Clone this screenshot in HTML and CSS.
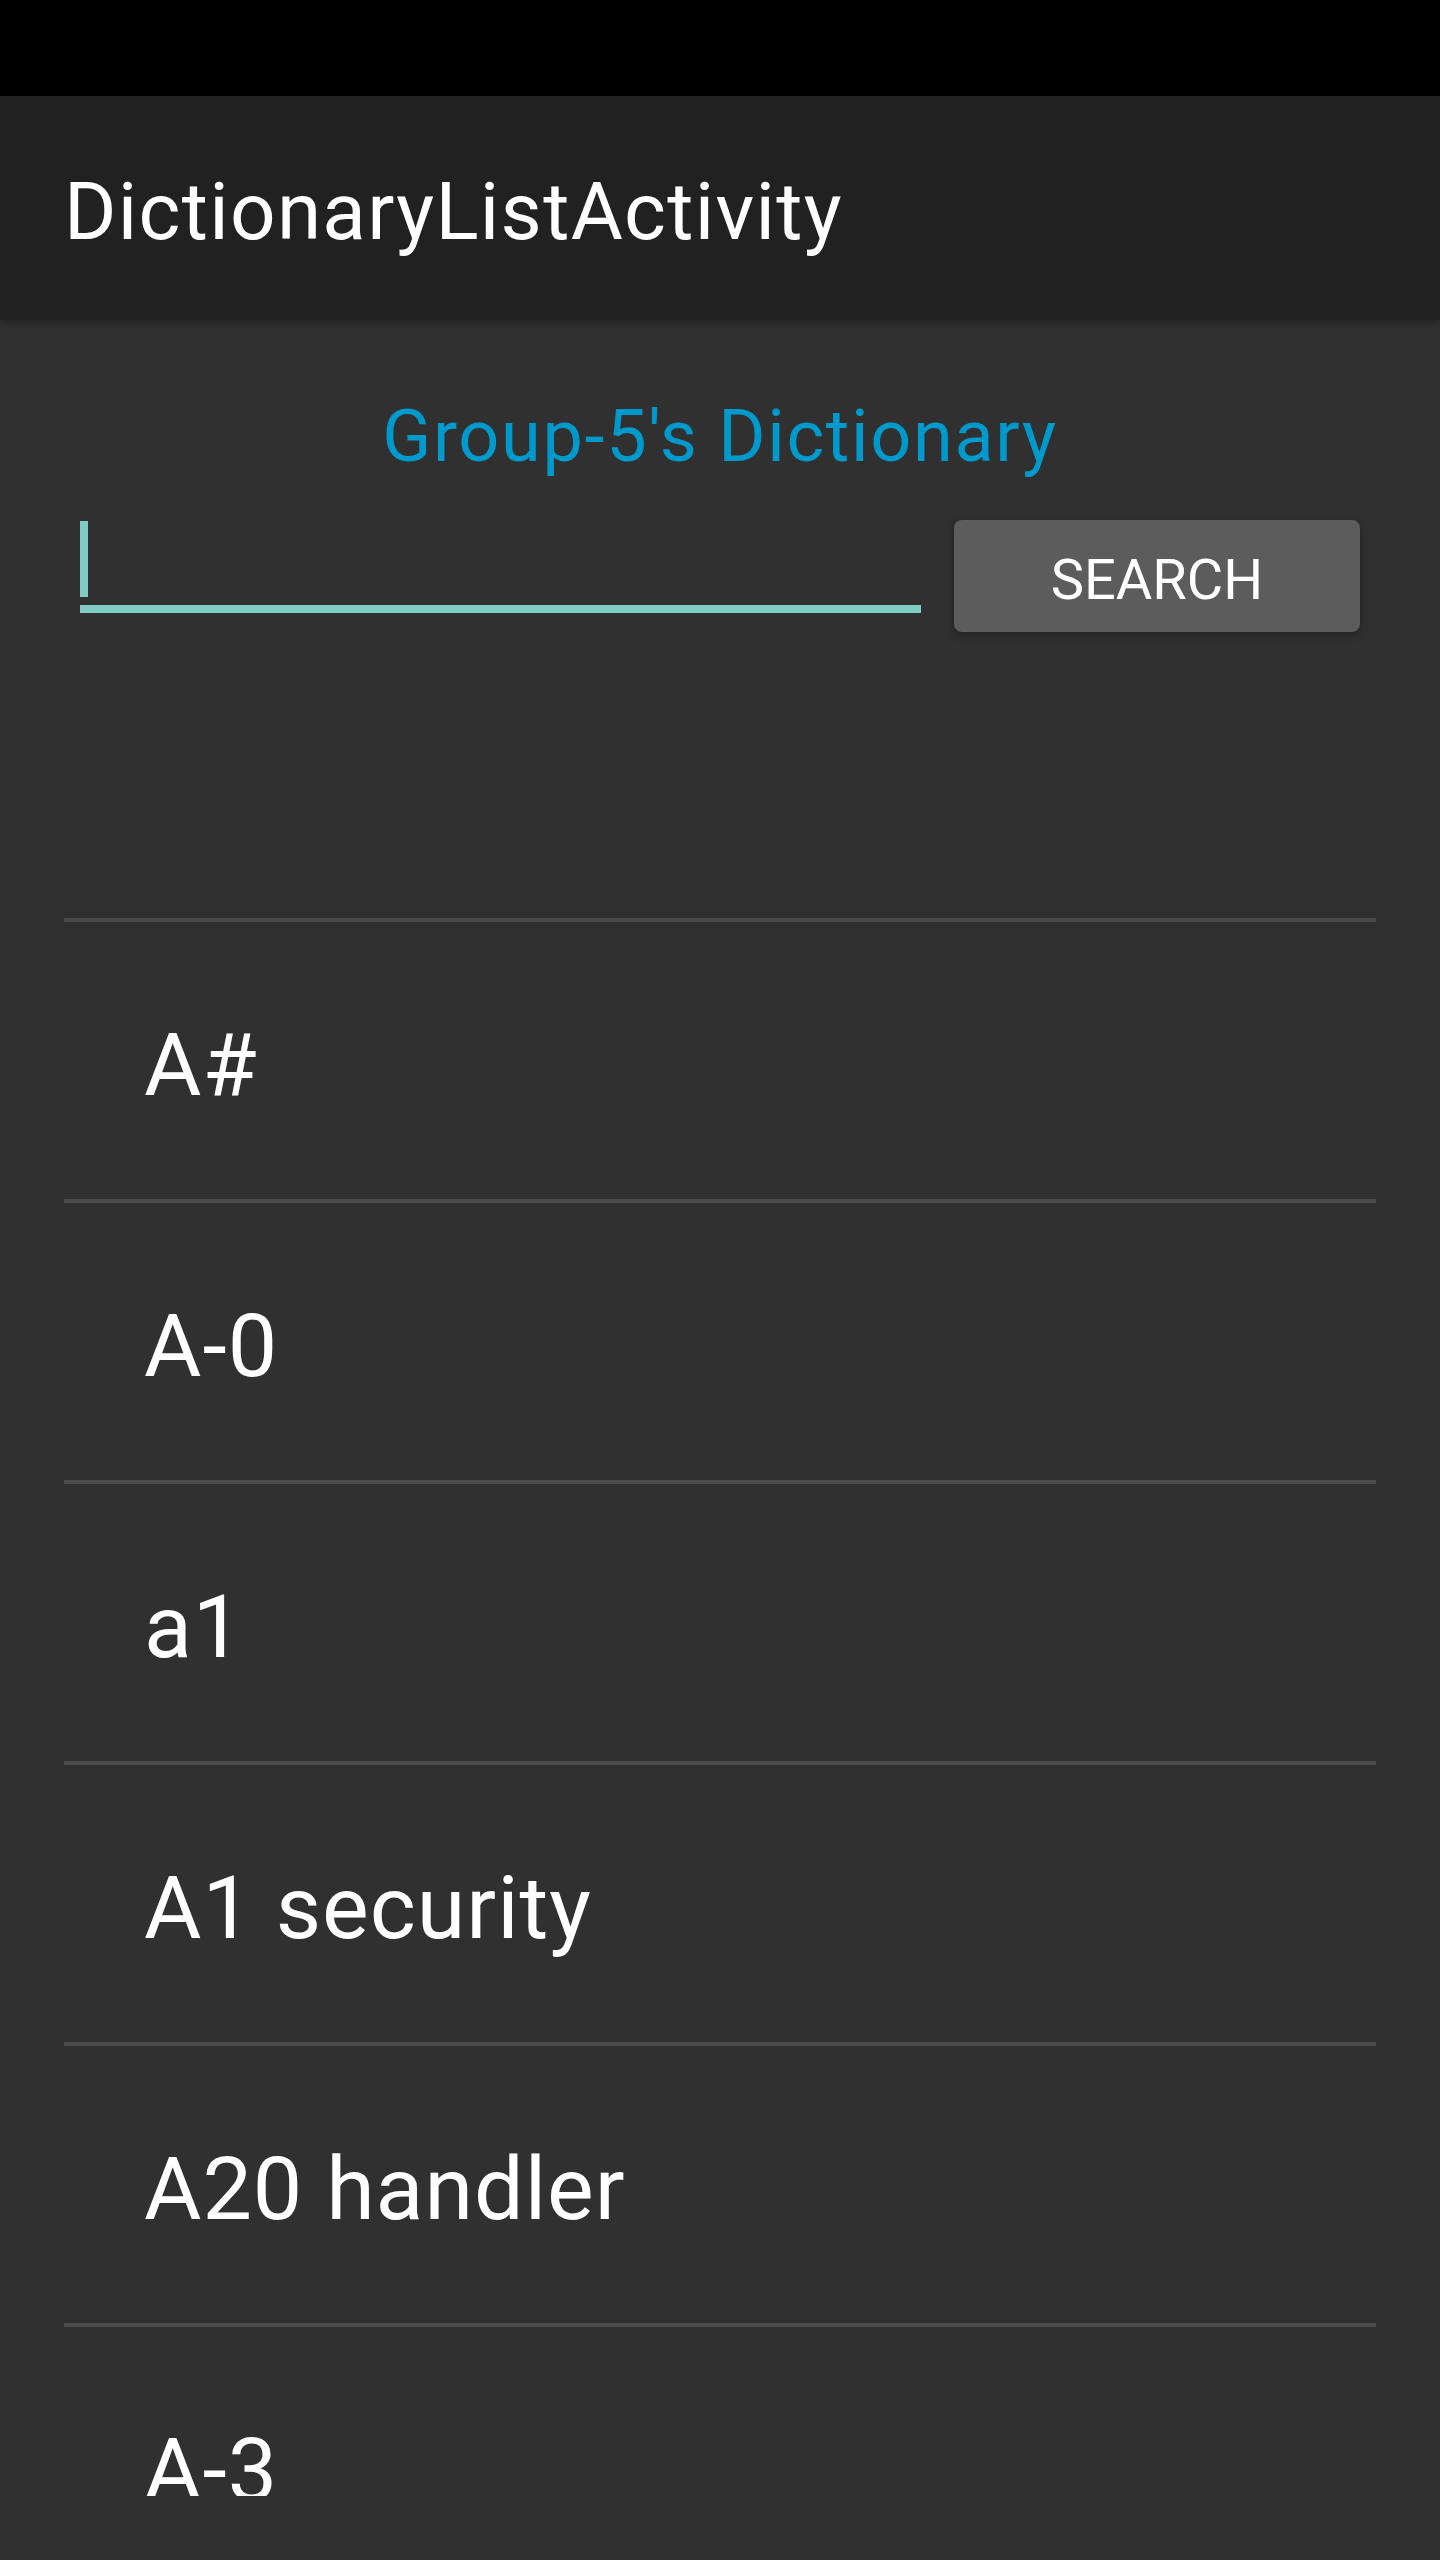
FILE: index.html
```html
<!DOCTYPE html>
<html lang="en">
<head>
<meta charset="utf-8">
<title>DictionaryListActivity</title>
<link rel="stylesheet" href="styles.css">
</head>
<body>
<div class="screen">
  <div class="status-bar"></div>
  <header class="app-bar">
    <h1 class="app-title">DictionaryListActivity</h1>
  </header>
  <main class="content">
    <h2 class="heading">Group-5's Dictionary</h2>
    <div class="search-row">
      <div class="field"><span class="cursor"></span></div>
      <button class="search-btn">SEARCH</button>
    </div>
    <ul class="word-list">
      <li class="word">A#</li>
      <li class="word">A-0</li>
      <li class="word">a1</li>
      <li class="word">A1 security</li>
      <li class="word">A20 handler</li>
      <li class="word">A-3</li>
    </ul>
  </main>
</div>
</body>
</html>
```

FILE: styles.css
```css
* { box-sizing: border-box; }
html, body {
  margin: 0;
  padding: 0;
  background: #303030;
}
body {
  font-family: Roboto, "Noto Sans", sans-serif;
  color: #ffffff;
}
.screen {
  width: 1440px;
  height: 2560px;
  overflow: hidden;
  background: #303030;
  display: flex;
  flex-direction: column;
}
.status-bar {
  height: 96px;
  background: #000000;
  flex: none;
}
.app-bar {
  height: 224px;
  flex: none;
  background: #212121;
  padding: 76px 64px 0;
  box-shadow: 0 3px 6px rgba(0, 0, 0, 0.28);
  position: relative;
  z-index: 1;
}
.app-title {
  margin: 0;
  font-size: 80px;
  line-height: 80px;
  font-weight: 400;
  letter-spacing: 1.3px;
  color: #ffffff;
}
.content {
  flex: none;
  height: 2176px;
  padding: 81px 64px 0;
  display: flex;
  flex-direction: column;
}
.heading {
  margin: 0;
  font-size: 72px;
  line-height: 72px;
  font-weight: 400;
  letter-spacing: 1.7px;
  color: #0099cc;
  text-align: center;
}
.search-row {
  margin-top: 47px;
  display: flex;
  align-items: flex-start;
}
.field {
  margin: 1px 0 0 16px;
  width: 841px;
  height: 92px;
  border-bottom: 8px solid #80cbc4;
}
.cursor {
  display: block;
  width: 8px;
  height: 76px;
  background: #80cbc4;
}
.search-btn {
  margin-left: 33px;
  width: 406px;
  height: 112px;
  padding: 8px 0 0;
  border: none;
  border-radius: 8px;
  background: #5c5c5d;
  color: #ffffff;
  font-family: Roboto, "Noto Sans", sans-serif;
  font-size: 56px;
  line-height: 104px;
  font-weight: 400;
  box-shadow: 0 3px 8px rgba(0, 0, 0, 0.35);
}
.word-list {
  list-style: none;
  margin: 286px 0 0;
  padding: 0;
  flex: 1;
  overflow: hidden;
}
.word {
  height: 281px;
  border-top: 4px solid #4a4a4a;
  padding: 8px 0 0 80px;
  font-size: 88px;
  line-height: 269px;
  letter-spacing: 1px;
  white-space: nowrap;
}
```
